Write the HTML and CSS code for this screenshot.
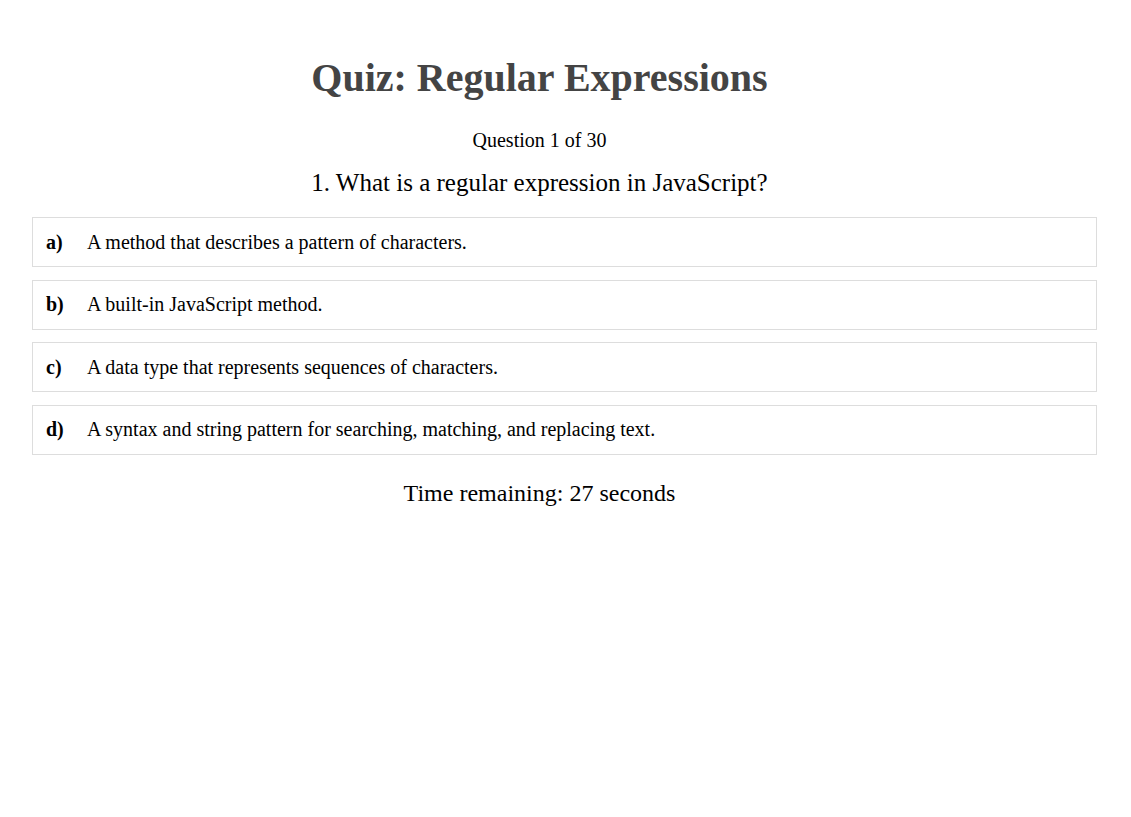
FILE: index.html
```html
<!DOCTYPE html>
<html>
<head>
<meta charset="utf-8">
<link rel="stylesheet" href="styles.css">
</head>
<body>
<main class="quiz">
  <h1 class="title">Quiz: Regular Expressions</h1>
  <p class="progress">Question 1 of 30</p>
  <h2 class="question">1. What is a regular expression in JavaScript?</h2>
  <ul class="options">
    <li class="option"><span class="label">a)</span><span class="text">A method that describes a pattern of characters.</span></li>
    <li class="option"><span class="label">b)</span><span class="text">A built-in JavaScript method.</span></li>
    <li class="option"><span class="label">c)</span><span class="text">A data type that represents sequences of characters.</span></li>
    <li class="option"><span class="label">d)</span><span class="text">A syntax and string pattern for searching, matching, and replacing text.</span></li>
  </ul>
  <p class="timer">Time remaining: 27 seconds</p>
</main>
</body>
</html>
```
FILE: styles.css
```css
html, body {
  margin: 0;
  padding: 0;
  background: #fff;
}
body {
  font-family: "Liberation Serif", "Times New Roman", serif;
  color: #000;
}
.quiz {
  width: 1015px;
  margin-left: 32px;
  padding-top: 52px;
  text-align: center;
}
.title {
  margin: 0;
  font-size: 40px;
  line-height: 52px;
  font-weight: bold;
  color: #444;
}
.progress {
  margin: 24px 0 0;
  font-size: 20px;
  line-height: 24px;
}
.question {
  margin: 16px 0 0;
  font-size: 25px;
  line-height: 30px;
  font-weight: normal;
}
.options {
  list-style: none;
  margin: 19px 0 0;
  padding: 0;
  width: 1065px;
  display: flex;
  flex-direction: column;
  gap: 12.5px;
  text-align: left;
}
.option {
  box-sizing: border-box;
  height: 50px;
  border: 1px solid #ddd;
  display: flex;
  align-items: center;
  padding-left: 13px;
  font-size: 20px;
}
.label {
  font-weight: bold;
  width: 41px;
  flex: none;
}
.timer {
  margin: 24px 0 0;
  font-size: 24px;
  line-height: 28px;
}
```
